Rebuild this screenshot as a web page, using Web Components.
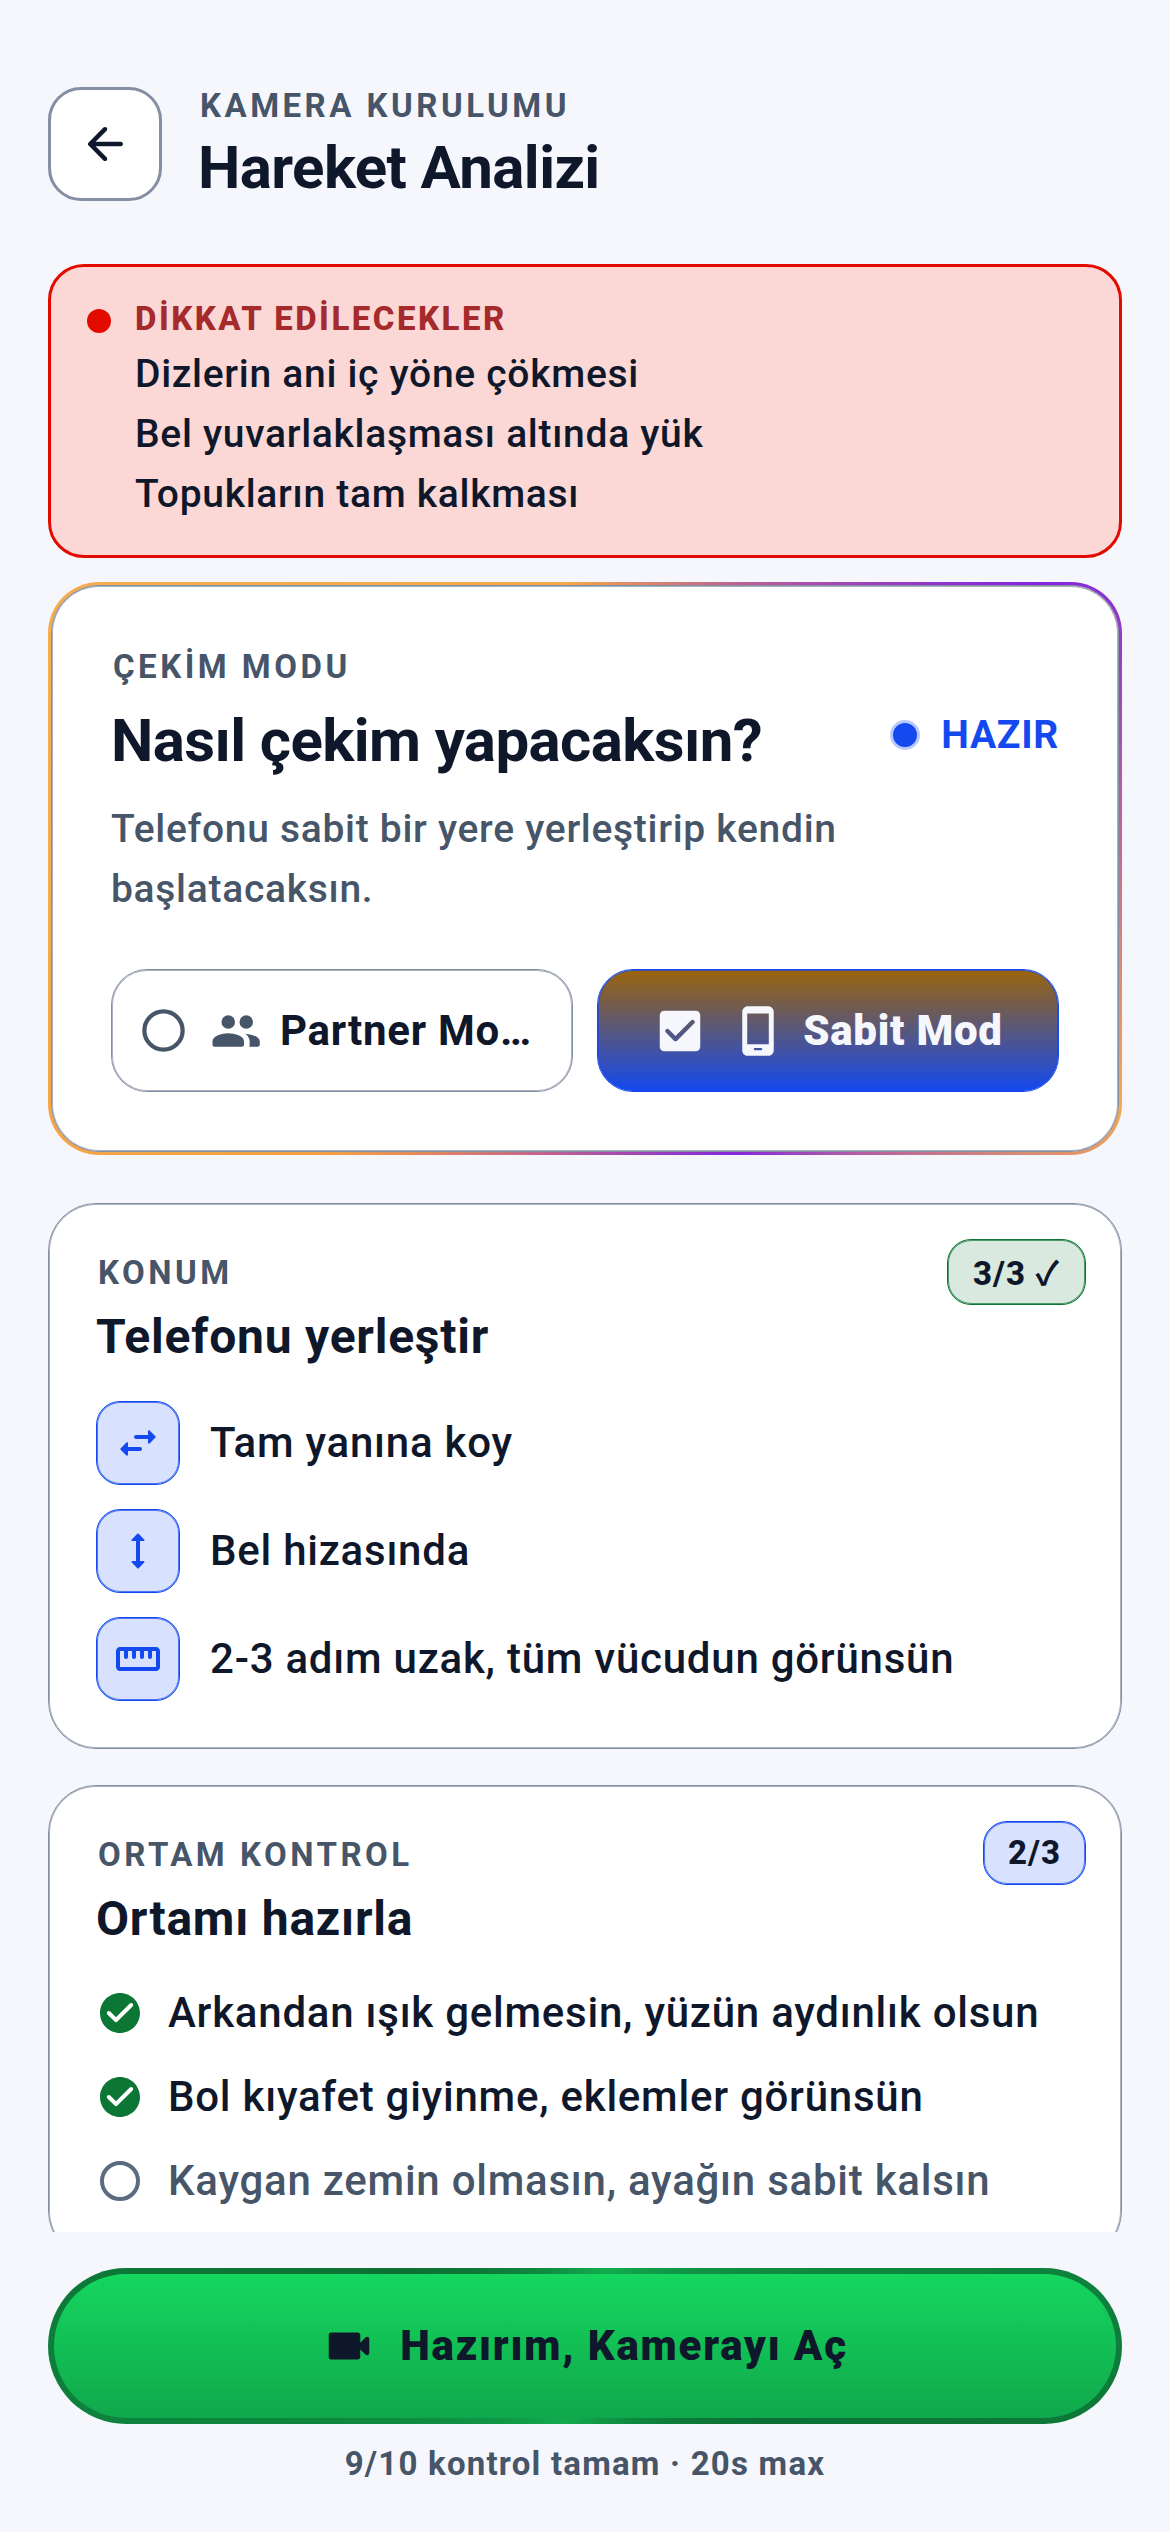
<!DOCTYPE html>
<html lang="tr">
<head>
<meta charset="utf-8">
<meta name="viewport" content="width=device-width, initial-scale=1">
<title>Hareket Analizi</title>
<style>
  :root {
    --bg: #f5f7fc;
    --ink: #0f172a;
    --muted: #475569;
    --line: #858fa3;
    --line-soft: #a9b1be;
    --blue: #1449f0;
    --blue-soft: #d8e1fd;
    --blue-edge: rgba(20, 73, 240, .7);
    --green: #0c7635;
    --green-soft: #d9e9df;
    --green-edge: rgba(12, 118, 53, .7);
    --red: #e30b00;
    --red-soft: #fbd7d5;
    --track-body: .018em;
  }
  html, body { height: 100%; }
  body {
    margin: 0;
    background: var(--bg);
    color: var(--ink);
    font-family: Roboto, "Liberation Sans", sans-serif;
    font-size: 42px;
    line-height: 60px;
  }
</style>
</head>
<body>
<analysis-screen></analysis-screen>

<script>
const text = `
  *, *::before { box-sizing: border-box; }
  h1, h2, p, ul { margin: 0; padding: 0; }
  ul { list-style: none; }
  svg { display: block; fill: currentColor; flex: none; }
  .eyebrow { padding-left: 2px; font-size: 33px; line-height: 44px; font-weight: 700;
    letter-spacing: .106em; color: var(--muted); }
  .title { font-size: 60px; line-height: 72px; font-weight: 700; letter-spacing: -.01em; }
`;

function define(name, css, html, setup) {
  const template = document.createElement('template');
  template.innerHTML = `<style>${text}${css}</style>${html}`;
  customElements.define(name, class extends HTMLElement {
    constructor() {
      super();
      this.attachShadow({ mode: 'open' }).append(template.content.cloneNode(true));
    }
    connectedCallback() {
      if (setup) setup(this, this.shadowRoot);
    }
  });
}

const icons = {
  back: '<path d="M19 11H7.83l4.88-4.88c.39-.39.39-1.03 0-1.42-.39-.39-1.02-.39-1.41 0l-6.59 6.59c-.39.39-.39 1.02 0 1.41l6.59 6.59c.39.39 1.02.39 1.41 0 .39-.39.39-1.02 0-1.41L7.83 13H19c.55 0 1-.45 1-1s-.45-1-1-1z"/>',
  ring: '<circle cx="12" cy="12" r="9" fill="none" stroke="currentColor" stroke-width="2"/>',
  checkBox: '<path fill-rule="evenodd" d="M19 3H5c-1.100 0-2 .9-2 2v14c0 1.100.9 2 2 2h14c1.100 0 2-.9 2-2V5c0-1.100-.9-2-2-2zm-8.290 13.290c-.39.39-1.020.39-1.410 0L5.710 12.700c-.39-.39-.39-1.020 0-1.410.39-.39 1.020-.39 1.410 0L10 14.170l6.880-6.880c.39-.39 1.020-.39 1.410 0 .39.39.39 1.020 0 1.410l-7.580 7.590z"/>',
  checkCircle: '<path fill-rule="evenodd" d="M12 2C6.480 2 2 6.480 2 12s4.480 10 10 10 10-4.480 10-10S17.520 2 12 2zM9.290 16.290L5.700 12.700c-.39-.39-.39-1.020 0-1.410.39-.39 1.020-.39 1.410 0L10 14.170l6.880-6.880c.39-.39 1.020-.39 1.410 0 .39.39.39 1.020 0 1.410l-7.590 7.590c-.38.39-1.020.39-1.410 0z"/>',
  people: '<circle cx="9" cy="8" r="3"/><circle cx="17" cy="8" r="3"/><path d="M9 13c-3 0-7 1.200-7 3.600V18c0 .6.400 1 1 1h12c.6 0 1-.4 1-1v-1.400C16 14.200 12 13 9 13z"/><path d="M16.600 13.200c1.200.9 1.900 2 1.900 3.400V18c0 .4-.1.700-.2 1H22c.6 0 1-.4 1-1v-1.400c0-2-3.300-3.100-6.400-3.400z"/>',
  phone: '<path fill-rule="evenodd" d="M7.500 1h9C17.900 1 19 2.100 19 3.500v17c0 1.400-1.100 2.500-2.500 2.500h-9C6.100 23 5 21.900 5 20.500v-17C5 2.100 6.100 1 7.500 1zM7.200 4.200v13.700h9.600V4.200zM10.600 19.500a.5.500 0 0 0 0 1h2.800a.5.500 0 0 0 0-1z"/>',
  swap: '<path d="M11 8h6V6.200c0-.5.500-.7.800-.4l2.900 2.800c.2.200.2.500 0 .7l-2.900 2.900c-.3.300-.8.100-.8-.4V10h-6a1 1 0 0 1 0-2zM13 16H7v1.800c0 .5-.5.700-.8.400l-2.900-2.800a.5.500 0 0 1 0-.7l2.900-2.900c.3-.3.800-.1.800.4V14h6a1 1 0 0 1 0 2z"/>',
  height: '<path d="M13 7h1.800c.4 0 .6-.5.300-.8l-2.750-2.800a.5.500 0 0 0-.7 0L8.900 6.200c-.3.300-.1.800.3.800H11v10H9.200c-.4 0-.6.500-.3.800l2.750 2.800c.2.200.5.200.7 0l2.750-2.800c.3-.3.100-.8-.3-.8H13z"/>',
  ruler: '<path fill-rule="evenodd" d="M21 6H3c-1.100 0-2 .9-2 2v8c0 1.100.9 2 2 2h18c1.100 0 2-.9 2-2V8c0-1.100-.9-2-2-2zM3 8h2v3a1 1 0 0 0 2 0V8h2v3a1 1 0 0 0 2 0V8h2v3a1 1 0 0 0 2 0V8h2v3a1 1 0 0 0 2 0V8h2v8H3z"/>',
  camera: '<path d="M17 10.500V7c0-.55-.45-1-1-1H4c-.55 0-1 .45-1 1v10c0 .55.450 1 1 1h12c.55 0 1-.45 1-1v-3.500l2.300 2.300c.6.600 1.700.2 1.700-.7V8.900c0-.9-1.100-1.300-1.700-.7z"/>'
};
const svg = (name, size) =>
  `<svg viewBox="0 0 24 24" width="${size}" height="${size}" aria-hidden="true">${icons[name]}</svg>`;

define('screen-header', `
  :host { display: flex; align-items: center; gap: 36px; padding: 84px 48px 60px; }
  button { display: grid; place-items: center; flex: none; width: 114px; height: 114px; padding: 0;
    background: #fff; border: 3px solid var(--line); border-radius: 33px; color: var(--ink); }
  .text { display: grid; gap: 4px; }
`, `
  <button type="button" aria-label="Geri">${svg('back', 54)}</button>
  <div class="text">
    <p class="eyebrow"><slot name="eyebrow"></slot></p>
    <h1 class="title"><slot></slot></h1>
  </div>
`);

define('warning-box', `
  :host { display: flex; gap: 24px; padding: 30px 36px 31px; background: var(--red-soft);
    border: 3px solid var(--red); border-radius: 36px; }
  .dot { flex: none; width: 24px; height: 24px; margin-top: 12px; border-radius: 50%; background: var(--red); }
  .text { display: grid; gap: 3px; }
  .eyebrow { padding-left: 0; color: #a52a2c; font-weight: 800; letter-spacing: .076em; }
  .lines { font-size: 39px; font-weight: 500; letter-spacing: var(--track-body); }
`, `
  <span class="dot"></span>
  <div class="text">
    <h2 class="eyebrow"><slot name="title"></slot></h2>
    <div class="lines"><slot></slot></div>
  </div>
`);

define('mode-option', `
  :host { display: block; flex: 1 1 0; min-width: 0; }
  label { position: relative; display: flex; align-items: center; justify-content: center; gap: 18px;
    height: 123px; padding: 0 24px; border: 1px solid var(--line); border-radius: 36px;
    box-shadow: inset 0 0 0 1px var(--line-soft); background: #fff; color: var(--muted); }
  input { position: absolute; inset: 0; width: 100%; height: 100%; margin: 0; opacity: 0; }
  .mark { display: grid; place-items: center; flex: none; width: 54px; }
  .name { min-width: 0; overflow: hidden; text-overflow: ellipsis; white-space: nowrap;
    font-size: 42px; font-weight: 700; letter-spacing: var(--track-body); color: var(--ink); }
  :host([selected]) label { color: var(--bg); border-color: var(--blue);
    box-shadow: inset 0 0 0 1px var(--blue-edge);
    background: linear-gradient(#9b640b, var(--blue)) padding-box; }
  :host([selected]) .mark { margin-right: 6px; }
  :host([selected]) .name { color: var(--bg); font-weight: 900; }
`, `
  <label>
    <input type="radio" name="mode">
    <span class="mark"></span>
    <span class="kind"></span>
    <span class="name"><slot></slot></span>
  </label>
`, (host, root) => {
  const on = host.hasAttribute('selected');
  root.querySelector('input').checked = on;
  root.querySelector('.mark').innerHTML = on ? svg('checkBox', 54) : svg('ring', 51);
  root.querySelector('.kind').innerHTML = svg(host.getAttribute('icon'), 54);
});

define('mode-card', `
  :host { display: block; padding: 3px; border-radius: 51px;
    background: conic-gradient(from -4deg, #f6a745, #8526dc 62deg, #f3aa54 118deg, #8526dc 156deg,
      #f8a140 228deg, #f3ae52 280deg, #f8aa48 340deg, #f6a745); }
  .body { padding: 59px; background: #fff; border: 1px solid var(--line); border-radius: 48px;
    box-shadow: inset 0 0 0 1px var(--line-soft); }
  .row { display: flex; justify-content: space-between; align-items: flex-start; margin-top: 16px; }
  .status { display: flex; align-items: center; gap: 24px; font-size: 39px; font-weight: 700;
    letter-spacing: var(--track-body); color: var(--blue); }
  .status::before { content: ""; width: 24px; height: 24px; border-radius: 50%;
    background: var(--blue); box-shadow: 0 0 0 3px #b9c8fb; }
  .hint { margin-top: 22px; font-size: 39px; font-weight: 500; letter-spacing: var(--track-body); color: var(--muted); }
  .options { display: flex; gap: 24px; margin-top: 50px; }
`, `
  <div class="body">
    <p class="eyebrow"><slot name="eyebrow"></slot></p>
    <div class="row">
      <h2 class="title"><slot name="title"></slot></h2>
      <span class="status"><slot name="status"></slot></span>
    </div>
    <p class="hint"><slot name="hint"></slot></p>
    <div class="options" role="radiogroup"><slot></slot></div>
  </div>
`);

define('count-badge', `
  :host { display: block; flex: none; padding: 10px 24px; font-size: 33px; line-height: 42px; font-weight: 800;
    letter-spacing: .03em; border: 1px solid var(--blue); border-radius: 24px; background: var(--blue-soft);
    box-shadow: inset 0 0 0 1px var(--blue-edge); }
  :host([done]) { padding: 13px 25px 9px; border-color: var(--green); background: var(--green-soft);
    box-shadow: inset 0 0 0 1px var(--green-edge); }
  ::slotted(span) { font-family: "Noto Sans CJK JP", sans-serif; font-weight: 700; line-height: 1; }
`, `<slot></slot>`);

define('section-card', `
  :host { display: block; padding: 47px; background: #fff; border: 1px solid var(--line);
    border-radius: 48px; box-shadow: inset 0 0 0 1px var(--line-soft); }
  header { display: flex; justify-content: space-between; align-items: flex-start; }
  h2 { margin-top: 12px; font-size: 48px; font-weight: 700; letter-spacing: .016em; }
  ::slotted(count-badge) { margin: -12px -12px 0 0; }
  .items { display: grid; gap: 24px; margin-top: 34px; }
`, `
  <header>
    <div>
      <p class="eyebrow"><slot name="eyebrow"></slot></p>
      <h2><slot name="title"></slot></h2>
    </div>
    <slot name="badge"></slot>
  </header>
  <div class="items"><slot></slot></div>
`);

define('place-step', `
  :host { display: flex; align-items: center; gap: 30px; font-weight: 500; letter-spacing: var(--track-body); }
  .tile { display: grid; place-items: center; flex: none; width: 84px; height: 84px; color: var(--blue);
    background: var(--blue-soft); border: 1px solid var(--blue); border-radius: 24px;
    box-shadow: inset 0 0 0 1px var(--blue-edge); }
`, `<span class="tile"></span><span><slot></slot></span>`, (host, root) => {
  root.querySelector('.tile').innerHTML = svg(host.getAttribute('icon'), 48);
});

define('check-row', `
  :host { display: block; font-weight: 500; letter-spacing: var(--track-body); }
  label { display: flex; align-items: center; gap: 24px; color: var(--muted); }
  .box { display: grid; flex: none; color: #5b6b80; }
  .box > * { grid-area: 1 / 1; }
  input { appearance: none; width: 48px; height: 48px; margin: 0; }
  :host([checked]) label { color: var(--ink); }
  :host([checked]) .box { color: var(--green); }
`, `
  <label>
    <span class="box"><input type="checkbox"><span class="glyph"></span></span>
    <span><slot></slot></span>
  </label>
`, (host, root) => {
  const on = host.hasAttribute('checked');
  root.querySelector('input').checked = on;
  root.querySelector('.glyph').innerHTML = svg(on ? 'checkCircle' : 'ring', 48);
});

define('start-bar', `
  :host { display: block; flex: none; padding: 36px 48px 48px; text-align: center; }
  button { display: flex; align-items: center; justify-content: center; gap: 24px; width: 100%; height: 156px;
    padding: 0; border: 6px solid transparent; border-radius: 78px; color: var(--ink);
    font: 900 42px/60px Roboto, "Liberation Sans", sans-serif; letter-spacing: .043em;
    background: linear-gradient(#15d65e, #10a84c) padding-box,
      conic-gradient(from 16deg, #12ac4f, #0c6f34 96deg, #12ac4f 180deg, #0c6f34 276deg, #12ac4f) border-box; }
  p { margin-top: 20px; font-size: 33px; line-height: 40px; font-weight: 700; letter-spacing: .037em; color: var(--muted); }
`, `
  <button type="button">${svg('camera', 54)}<span><slot></slot></span></button>
  <p><slot name="note"></slot></p>
`);

define('analysis-screen', `
  :host { display: flex; flex-direction: column; height: 100vh; }
  main { flex: 1 1 0; min-height: 0; overflow: hidden; display: flex; flex-direction: column; padding: 0 48px; }
  main > * { flex: none; }
  mode-card { margin-top: 24px; }
  section-card { margin-top: 48px; }
  section-card + section-card { margin-top: 36px; }
`, `
  <screen-header><span slot="eyebrow">KAMERA KURULUMU</span>Hareket Analizi</screen-header>
  <main>
    <warning-box>
      <span slot="title">DİKKAT EDİLECEKLER</span>
      <p>Dizlerin ani iç yöne çökmesi</p>
      <p>Bel yuvarlaklaşması altında yük</p>
      <p>Topukların tam kalkması</p>
    </warning-box>
    <mode-card>
      <span slot="eyebrow">ÇEKİM MODU</span>
      <span slot="title">Nasıl çekim yapacaksın?</span>
      <span slot="status">HAZIR</span>
      <span slot="hint">Telefonu sabit bir yere yerleştirip kendin başlatacaksın.</span>
      <mode-option icon="people">Partner Modu</mode-option>
      <mode-option icon="phone" selected>Sabit Mod</mode-option>
    </mode-card>
    <section-card>
      <span slot="eyebrow">KONUM</span>
      <span slot="title">Telefonu yerleştir</span>
      <count-badge slot="badge" done>3/3 <span>✓</span></count-badge>
      <place-step icon="swap">Tam yanına koy</place-step>
      <place-step icon="height">Bel hizasında</place-step>
      <place-step icon="ruler">2-3 adım uzak, tüm vücudun görünsün</place-step>
    </section-card>
    <section-card>
      <span slot="eyebrow">ORTAM KONTROL</span>
      <span slot="title">Ortamı hazırla</span>
      <count-badge slot="badge">2/3</count-badge>
      <check-row checked>Arkandan ışık gelmesin, yüzün aydınlık olsun</check-row>
      <check-row checked>Bol kıyafet giyinme, eklemler görünsün</check-row>
      <check-row>Kaygan zemin olmasın, ayağın sabit kalsın</check-row>
    </section-card>
  </main>
  <start-bar>Hazırım, Kamerayı Aç<span slot="note">9/10 kontrol tamam · 20s max</span></start-bar>
`);
</script>
</body>
</html>
